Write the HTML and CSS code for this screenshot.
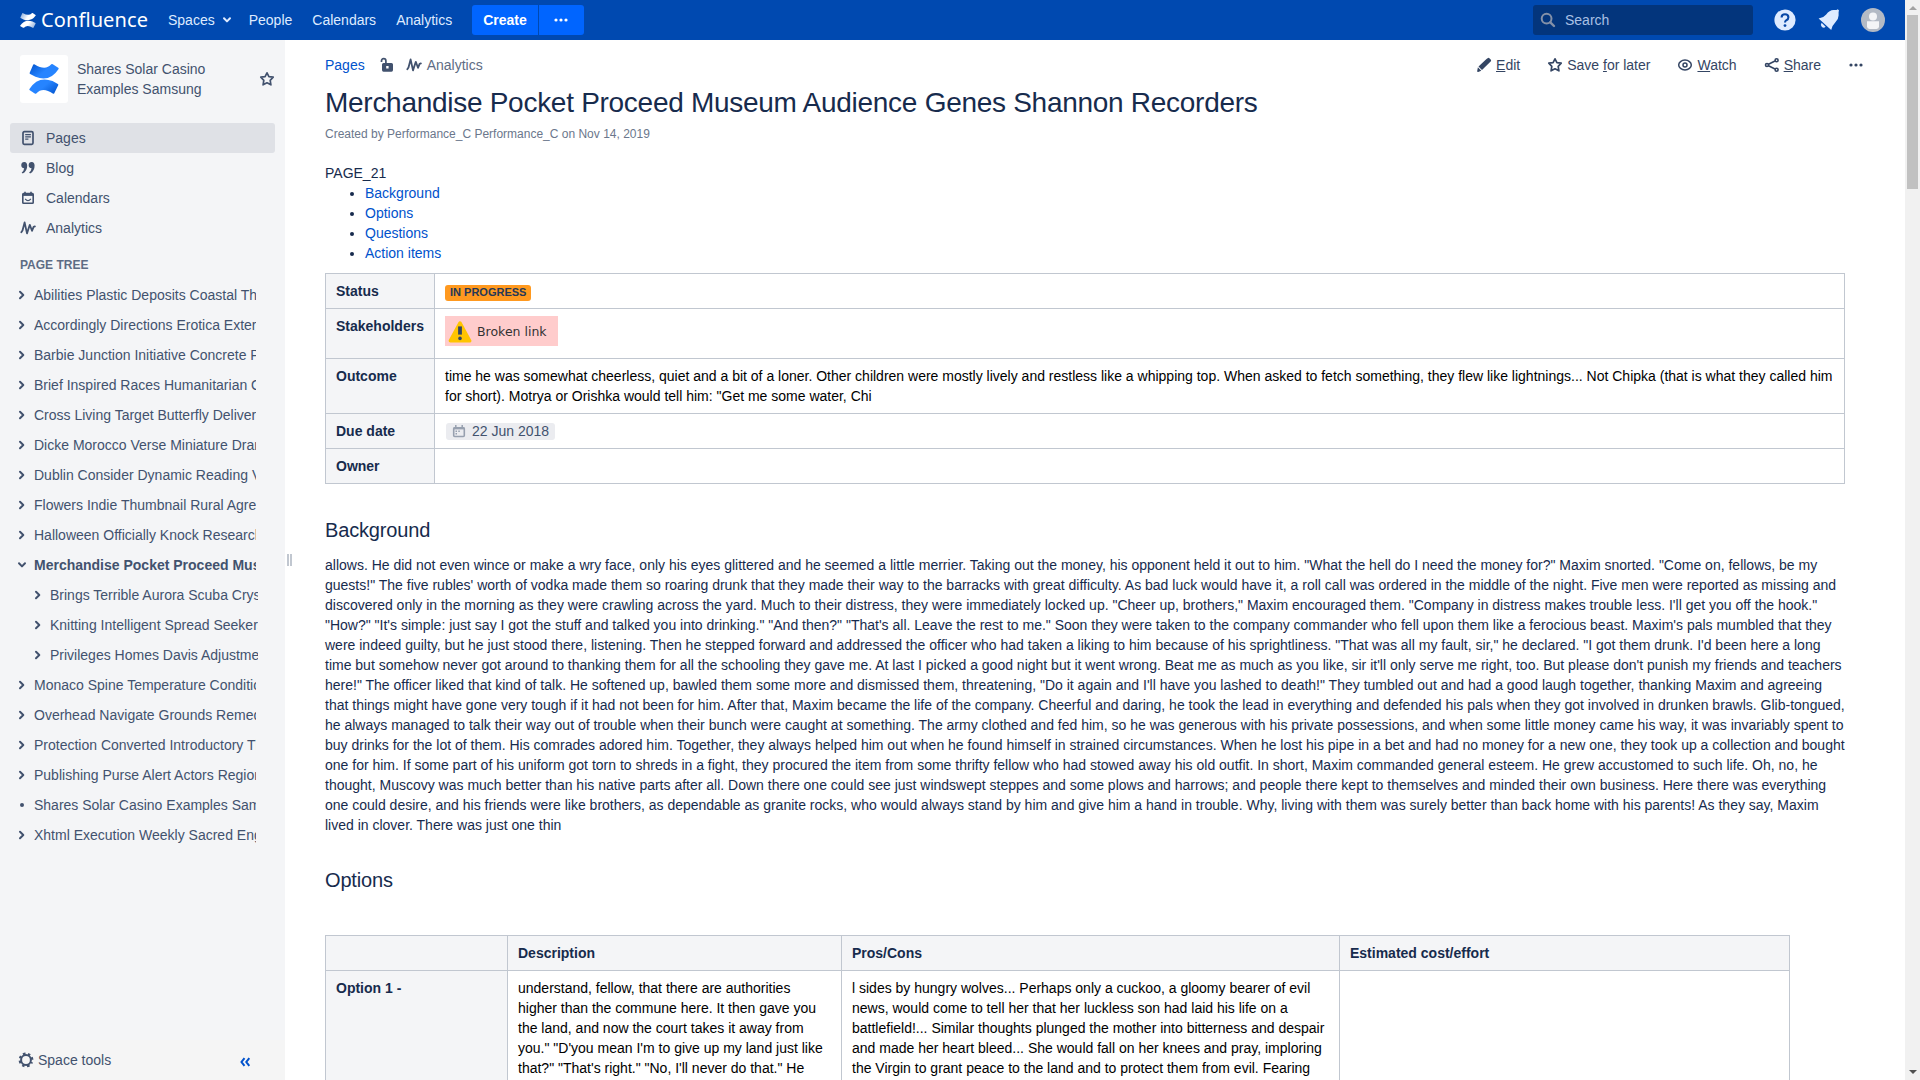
FILE: index.html
```html
<!DOCTYPE html>
<html lang="en">
<head>
<meta charset="utf-8">
<title>Merchandise Pocket Proceed Museum Audience Genes Shannon Recorders</title>
<link rel="stylesheet" href="styles.css">
</head>
<body>
<svg width="0" height="0" class="defs">
  <defs>
    <linearGradient id="gTop" x1="0" y1="0" x2="1" y2="0.6"><stop offset="0" stop-color="#0052cc"/><stop offset="0.6" stop-color="#2684ff"/></linearGradient>
    <linearGradient id="gBot" x1="1" y1="1" x2="0" y2="0.4"><stop offset="0" stop-color="#0052cc"/><stop offset="0.6" stop-color="#2684ff"/></linearGradient>
    <linearGradient id="wTop" x1="0" y1="0" x2="1" y2="0.3"><stop offset="0" stop-color="#fff" stop-opacity=".5"/><stop offset="0.6" stop-color="#fff"/></linearGradient>
    <linearGradient id="wBot" x1="1" y1="1" x2="0" y2="0.7"><stop offset="0" stop-color="#fff" stop-opacity=".5"/><stop offset="0.6" stop-color="#fff"/></linearGradient>
    <symbol id="analytics" viewBox="0 0 16 16"><path d="M1.3 12.2L2.5 10.4L4.6 2.4L7 13.4L9.8 4.8L12 10.8L13.6 6.8L14.9 6.4" fill="none" stroke="currentColor" stroke-width="1.8" stroke-linejoin="round" stroke-linecap="round"/></symbol>
    <symbol id="star" viewBox="0 0 16 16"><path d="M8 1.8L9.9 5.6L14.2 6.2L11.2 9.3L11.9 13.8L8 11.8L4.1 13.8L4.8 9.3L1.8 6.2L6.1 5.6Z" fill="none" stroke="currentColor" stroke-width="1.7" stroke-linejoin="round"/></symbol>
    <symbol id="chev" viewBox="0 0 8 10"><path d="M2 1.8L5.3 5L2 8.2" fill="none" stroke="currentColor" stroke-width="2" stroke-linecap="round" stroke-linejoin="round"/></symbol>
    <symbol id="chevdown" viewBox="0 0 10 8"><path d="M2 2.3L5 5.4L8 2.3" fill="none" stroke="currentColor" stroke-width="2" stroke-linecap="round" stroke-linejoin="round"/></symbol>
    <symbol id="dots" viewBox="0 0 14 4"><circle cx="2" cy="2" r="1.6"/><circle cx="7" cy="2" r="1.6"/><circle cx="12" cy="2" r="1.6"/></symbol>
    <path id="ribbonTop" d="M3.7.6Q4.2-.1 5 .4Q14.2 7 19.3.3Q19.8-.2 20.6.2L25.3 3.8Q26 4.4 25.5 5.2Q18 18.5 5.6 12.8L1 10Q.3 9.5.7 8.6Z"/>
    <path id="ribbonBottom" d="M21.8 29.4Q21.3 30 20.6 29.6Q12 22.5 6.3 29.4Q5.8 29.9 5 29.6L.7 26.3Q0 25.7.4 24.9Q8 11.500 20.400 17.100L25 19.900Q25.700 20.400 25.300 21.300Z"/>
  </defs>
</svg>
<div class="window">
  <div class="app">
    <header class="topbar">
      <a class="brand">
        <svg width="16" height="15" viewBox="0 0 26 30" preserveAspectRatio="none"><use href="#ribbonTop" fill="url(#wTop)"/><use href="#ribbonBottom" fill="url(#wBot)"/></svg>
        <span class="brand-name">Confluence</span>
      </a>
      <nav class="topnav">
        <a>Spaces <svg class="nav-chev" width="10" height="8"><use href="#chevdown"/></svg></a>
        <a>People</a>
        <a>Calendars</a>
        <a>Analytics</a>
      </nav>
      <div class="create"><button class="btn main">Create</button><button class="btn more"><svg width="14" height="4" fill="#fff"><use href="#dots"/></svg></button></div>
      <div class="tools">
        <div class="search"><svg width="16" height="16" viewBox="0 0 16 16"><circle cx="6.6" cy="6.6" r="4.9" fill="none" stroke="currentColor" stroke-width="2"/><path d="M10.3 10.3L14 14" stroke="currentColor" stroke-width="2.4" stroke-linecap="round"/></svg><span>Search</span></div>
        <svg class="t-help" width="22" height="22" viewBox="0 0 22 22"><circle cx="11" cy="11" r="10.6" fill="#deebff"/><path d="M7.6 8.6Q7.6 5.3 11 5.3Q14.4 5.3 14.4 8.2Q14.4 10.2 12.4 11.2Q11 12 11 13.6" fill="none" stroke="#0747a6" stroke-width="2.1"/><circle cx="11" cy="16.6" r="1.4" fill="#0747a6"/></svg>
        <svg class="t-bell" width="22" height="22" viewBox="0 0 22 22" fill="#deebff"><path d="M.6 9.6Q5.500 8.800 8.200 5.400Q11.400 .9 15.500 .9H18.500L19.800 .2L21 1.400L20.600 3V6.500Q20.600 9.600 17.600 13Q14.200 16.400 13.200 20.900Z"/><path d="M3.600 13.700L7.600 17.700Q5.800 19.600 3.900 17.900Q2 16 3.600 13.700Z"/></svg>
        <svg class="t-user" width="24" height="24" viewBox="0 0 24 24"><circle cx="12" cy="12" r="12" fill="#b3bac5"/><circle cx="12" cy="8.6" r="4" fill="#f4f5f7"/><path d="M6 13.3H18V18.6Q18 21 15.6 21H8.4Q6 21 6 18.6Z" fill="#f4f5f7"/></svg>
      </div>
    </header>
    <div class="body">
      <aside class="sidebar">
        <div class="space">
          <div class="space-logo"><svg width="30" height="30" viewBox="0 0 26 30" preserveAspectRatio="none"><use href="#ribbonTop" fill="url(#gTop)"/><use href="#ribbonBottom" fill="url(#gBot)"/></svg></div>
          <div class="space-name">Shares Solar Casino Examples Samsung</div>
          <svg class="space-star" width="16" height="16"><use href="#star"/></svg>
        </div>
        <nav class="links">
          <a class="active"><svg width="16" height="16" viewBox="0 0 16 16" fill="none" stroke="currentColor"><rect x="3" y="1.600" width="10" height="12.800" rx="1.300" stroke-width="1.700"/><path d="M5.200 4.700H10.900M5.200 6.900H10.900M5.200 9.100H8.400" stroke-width="1.200"/></svg>Pages</a>
          <a><svg width="16" height="16" viewBox="0 0 16 16" fill="currentColor"><path d="M4.500 2A3.100 3.100 0 1 0 4.200 8.200Q3.900 10.800 1.700 12.600L2.700 13.600Q7.300 10.800 7.200 5.400Q7 2.100 4.500 2ZM11.900 2A3.100 3.100 0 1 0 11.600 8.200Q11.300 10.800 9.100 12.600L10.100 13.600Q14.700 10.800 14.600 5.400Q14.400 2.100 11.900 2Z"/></svg>Blog</a>
          <a><svg width="16" height="16" viewBox="0 0 16 16" fill="none" stroke="currentColor"><rect x="2.800" y="3.600" width="10.400" height="9.600" rx=".8" stroke-width="1.600"/><path d="M2.500 4.900H13.500" stroke-width="2"/><path d="M5 1.800V4M11 1.800V4" stroke-width="1.600"/><path d="M5.200 8.800Q8 12.300 10.800 8.800" stroke-width="1.300"/></svg>Calendars</a>
          <a><svg width="16" height="16"><use href="#analytics"/></svg>Analytics</a>
        </nav>
        <h5 class="tree-title">PAGE TREE</h5>
        <ul class="tree">
          <li><svg><use href="#chev"/></svg><span>Abilities Plastic Deposits Coastal Theater</span></li>
          <li><svg><use href="#chev"/></svg><span>Accordingly Directions Erotica External</span></li>
          <li><svg><use href="#chev"/></svg><span>Barbie Junction Initiative Concrete Pool</span></li>
          <li><svg><use href="#chev"/></svg><span>Brief Inspired Races Humanitarian Organ</span></li>
          <li><svg><use href="#chev"/></svg><span>Cross Living Target Butterfly Delivery</span></li>
          <li><svg><use href="#chev"/></svg><span>Dicke Morocco Verse Miniature Drama</span></li>
          <li><svg><use href="#chev"/></svg><span>Dublin Consider Dynamic Reading Values</span></li>
          <li><svg><use href="#chev"/></svg><span>Flowers Indie Thumbnail Rural Agreed</span></li>
          <li><svg><use href="#chev"/></svg><span>Halloween Officially Knock Research</span></li>
          <li class="current"><svg class="down"><use href="#chevdown"/></svg><span>Merchandise Pocket Proceed Museum</span></li>
          <li class="child"><svg><use href="#chev"/></svg><span>Brings Terrible Aurora Scuba Crystal</span></li>
          <li class="child"><svg><use href="#chev"/></svg><span>Knitting Intelligent Spread Seekers</span></li>
          <li class="child"><svg><use href="#chev"/></svg><span>Privileges Homes Davis Adjustment</span></li>
          <li><svg><use href="#chev"/></svg><span>Monaco Spine Temperature Condition</span></li>
          <li><svg><use href="#chev"/></svg><span>Overhead Navigate Grounds Remedy</span></li>
          <li><svg><use href="#chev"/></svg><span>Protection Converted Introductory Them</span></li>
          <li><svg><use href="#chev"/></svg><span>Publishing Purse Alert Actors Regions</span></li>
          <li><svg viewBox="0 0 8 10"><circle cx="4" cy="5" r="2" fill="currentColor"/></svg><span>Shares Solar Casino Examples Samsung</span></li>
          <li><svg><use href="#chev"/></svg><span>Xhtml Execution Weekly Sacred Engine</span></li>
        </ul>
        <div class="side-foot">
          <svg width="16" height="16" viewBox="0 0 16 16" fill="none" stroke="currentColor"><circle cx="8" cy="8" r="4.900" stroke-width="2"/><circle cx="8" cy="8" r="6.300" stroke-width="2.200" stroke-dasharray="2.500 2.448" stroke-dashoffset="1.250" transform="rotate(22.500 8 8)"/></svg>
          <span>Space tools</span>
          <svg class="collapse" width="11" height="10" viewBox="0 0 11 10"><path d="M4.500 1.200L1.500 5L4.500 8.800M9.300 1.200L6.300 5L9.300 8.800" fill="none" stroke="#0052cc" stroke-width="2"/></svg>
        </div>
      </aside>
      <div class="splitter"><i></i><i></i></div>
      <main class="content">
        <div class="crumbs">
          <a class="link">Pages</a>
          <svg class="lock" width="16" height="16" viewBox="0 0 16 16"><path d="M2.500 5V4Q2.500 1.700 4.700 1.700Q6.900 1.700 6.900 4V7" fill="none" stroke="currentColor" stroke-width="1.700"/><path fill-rule="evenodd" d="M4.500 6H12.500Q14 6 14 7.500V13Q14 14.700 12.500 14.700H4.500Q3 14.700 3 13V7.500Q3 6 4.500 6ZM7.200 9V11.500H9.600V9Z" fill="currentColor"/></svg>
          <svg class="an" width="16" height="16"><use href="#analytics"/></svg>
          <span class="an-text">Analytics</span>
          <div class="actions">
            <a class="edit"><svg width="16" height="16" viewBox="0 0 16 16" fill="currentColor"><path d="M10.500 2L12 .9Q12.700.6 13.400 1.200L14.900 2.700Q15.400 3.400 14.900 4.200L6 13L2.500 9.500ZM1.900 10.300L5.300 13.700L2.200 14.900Q1 15.100 1.200 14Z"/></svg><span><u>E</u>dit</span></a>
            <a class="save"><svg width="16" height="16"><use href="#star"/></svg><span>Save <u>f</u>or later</span></a>
            <a class="watch"><svg width="16" height="16" viewBox="0 0 16 16" fill="none" stroke="currentColor"><ellipse cx="8" cy="8" rx="6.300" ry="4.900" stroke-width="1.500"/><circle cx="8" cy="8" r="2" stroke-width="1.500"/></svg><span><u>W</u>atch</span></a>
            <a class="share"><svg width="16" height="16" viewBox="0 0 16 16" fill="none" stroke="currentColor" stroke-width="1.600"><circle cx="3" cy="8" r="1.500"/><circle cx="12.600" cy="3.300" r="1.500"/><circle cx="12.600" cy="12.700" r="1.500"/><path d="M4.500 7.300L11 4M4.500 8.700L11 12"/></svg><span><u>S</u>hare</span></a>
            <svg class="more-dots" width="14" height="4" fill="currentColor"><use href="#dots"/></svg>
          </div>
        </div>
        <h1>Merchandise Pocket Proceed Museum Audience Genes Shannon Recorders</h1>
        <p class="meta">Created by Performance_C Performance_C on Nov 14, 2019</p>
        <p class="lead">PAGE_21</p>
        <ul class="toc"><li><a>Background</a></li><li><a>Options</a></li><li><a>Questions</a></li><li><a>Action items</a></li></ul>
        <table class="info">
          <tr><th>Status</th><td><span class="lozenge">IN PROGRESS</span></td></tr>
          <tr><th>Stakeholders</th><td class="tall"><span class="broken"><svg width="24" height="22" viewBox="0 0 24 22"><path d="M12 2.200L21.600 19.800H2.400Z" fill="#ffc400" stroke="#ffc400" stroke-width="3.600" stroke-linejoin="round"/><path d="M12 5.400V13.600" stroke="#344563" stroke-width="3.800"/><circle cx="12" cy="17.400" r="1.800" fill="#344563"/></svg>Broken link</span></td></tr>
          <tr><th>Outcome</th><td>time he was somewhat cheerless, quiet and a bit of a loner. Other children were mostly lively and restless like a whipping top. When asked to fetch something, they flew like lightnings... Not Chipka (that is what they called him for short). Motrya or Orishka would tell him: "Get me some water, Chi</td></tr>
          <tr><th>Due date</th><td><span class="date"><svg width="14" height="13" viewBox="0 0 14 13" fill="none" stroke="#97a0af"><rect x="1.700" y="2.700" width="10.600" height="8.800" rx="1" stroke-width="1.600"/><path d="M1.500 3.400H12.500" stroke-width="2"/><path d="M3.800 0V3M10.200 0V3" stroke-width="1.500"/><path d="M3.500 6.300H5M6.300 6.300H7.800M3.500 8.700H5" stroke-width="1.500"/></svg><span>22 Jun 2018</span></span></td></tr>
          <tr><th>Owner</th><td></td></tr>
        </table>
        <h2 class="h-bg">Background</h2>
        <p class="para">allows. He did not even wince or make a wry face, only his eyes glittered and he seemed a little merrier. Taking out the money, his opponent held it out to him. "What the hell do I need the money for?" Maxim snorted. "Come on, fellows, be my guests!" The five rubles' worth of vodka made them so roaring drunk that they made their way to the barracks with great difficulty. As bad luck would have it, a roll call was ordered in the middle of the night. Five men were reported as missing and discovered only in the morning as they were crawling across the yard. Much to their distress, they were immediately locked up. "Cheer up, brothers," Maxim encouraged them. "Company in distress makes trouble less. I'll get you off the hook." "How?" "It's simple: just say I got the stuff and talked you into drinking." "And then?" "That's all. Leave the rest to me." Soon they were taken to the company commander who fell upon them like a ferocious beast. Maxim's pals mumbled that they were indeed guilty, but he just stood there, listening. Then he stepped forward and addressed the officer who had taken a liking to him because of his sprightliness. "That was all my fault, sir," he declared. "I got them drunk. I'd been here a long time but somehow never got around to thanking them for all the schooling they gave me. At last I picked a good night but it went wrong. Beat me as much as you like, sir it'll only serve me right, too. But please don't punish my friends and teachers here!" The officer liked that kind of talk. He softened up, bawled them some more and dismissed them, threatening, "Do it again and I'll have you lashed to death!" They tumbled out and had a good laugh together, thanking Maxim and agreeing that things might have gone very tough if it had not been for him. After that, Maxim became the life of the company. Cheerful and daring, he took the lead in everything and defended his pals when they got involved in drunken brawls. Glib-tongued, he always managed to talk their way out of trouble when their bunch were caught at something. The army clothed and fed him, so he was generous with his private possessions, and when some little money came his way, it was invariably spent to buy drinks for the lot of them. His comrades adored him. Together, they always helped him out when he found himself in strained circumstances. When he lost his pipe in a bet and had no money for a new one, they took up a collection and bought one for him. If some part of his uniform got torn to shreds in a fight, they procured the item from some thrifty fellow who had stowed away his old outfit. In short, Maxim commanded general esteem. He grew accustomed to such life. Oh, no, he thought, Muscovy was much better than his native parts after all. Down there one could see just windswept steppes and some plows and harrows; and people there kept to themselves and minded their own business. Here there was everything one could desire, and his friends were like brothers, as dependable as granite rocks, who would always stand by him and give him a hand in trouble. Why, living with them was surely better than back home with his parents! As they say, Maxim lived in clover. There was just one thin</p>
        <h2 class="h-opt">Options</h2>
        <table class="options">
          <colgroup><col class="c1"><col class="c2"><col class="c3"><col class="c4"></colgroup>
          <tr><th></th><th>Description</th><th>Pros/Cons</th><th>Estimated cost/effort</th></tr>
          <tr><th>Option 1 -</th><td>understand, fellow, that there are authorities higher than the commune here. It then gave you the land, and now the court takes it away from you." "D'you mean I'm to give up my land just like that?" "That's right." "No, I'll never do that." He</td><td>l sides by hungry wolves... Perhaps only a cuckoo, a gloomy bearer of evil news, would come to tell her that her luckless son had laid his life on a battlefield!... Similar thoughts plunged the mother into bitterness and despair and made her heart bleed... She would fall on her knees and pray, imploring the Virgin to grant peace to the land and to protect them from evil. Fearing</td><td></td></tr>
        </table>
      </main>
    </div>
  </div>
  <div class="scrollbar"><i class="up"></i><i class="thumb"></i><i class="dn"></i></div>
</div>
</body>
</html>
```
FILE: styles.css
```css
* { box-sizing: border-box; }
body { margin: 0; font: 14px/20px "Liberation Sans", Arial, sans-serif; color: #172b4d; background: #fff; overflow: hidden; }
svg { display: block; flex: none; }
.defs { width: 0; height: 0; }
ul, p, h1, h2, h5 { margin: 0; padding: 0; font-weight: 400; }
.window { display: flex; height: 1080px; width: 1920px; overflow: hidden; }
.app { width: 1905px; display: flex; flex-direction: column; }

.topbar { height: 40px; flex: none; background: #0049b0; color: #deebff; display: flex; align-items: center; padding: 0 20px; }
.brand { display: flex; align-items: center; width: 148px; gap: 5px; }
.brand-name { font: 400 20px/24px "Noto Sans", sans-serif; letter-spacing: .1px; color: #fff; }
.topnav { display: flex; gap: 20px; width: 304px; }
.topnav a { display: flex; align-items: center; }
.nav-chev { margin: 0 -3px 0 7px; }
.create { display: flex; gap: 1px; }
.btn { border: 0; height: 30px; background: #0065ff; color: #fff; font: bold 14px/20px "Liberation Sans", Arial, sans-serif; padding: 0; display: flex; align-items: center; justify-content: center; }
.main { width: 66px; border-radius: 3px 0 0 3px; }
.more { width: 45px; border-radius: 0 3px 3px 0; padding-right: 2px; }
.tools { margin-left: auto; display: flex; align-items: center; }
.search { width: 220px; height: 30px; border-radius: 3px; background: #03357c; display: flex; align-items: center; padding-left: 7px; gap: 9px; color: #8491a8; }
.search span { color: #a9c0e4; }
.t-help { margin-left: 21px; }
.t-bell { margin-left: 22px; }
.t-user { margin-left: 21px; }

.body { display: flex; flex: 1; min-height: 0; }
.sidebar { width: 285px; background: #f4f5f7; color: #42526e; display: flex; flex-direction: column; flex: none; }
.space { height: 83px; padding: 15px 10px 0 20px; display: flex; }
.space-logo { width: 48px; height: 48px; background: #fff; border-radius: 3px; display: flex; align-items: center; justify-content: center; }
.space-name { width: 145px; margin: 4px 0 0 9px; }
.space-star { margin: 16px 0 0 37px; }
.links { padding: 0 10px; }
.links a { height: 30px; border-radius: 3px; display: flex; align-items: center; gap: 10px; padding-left: 10px; }
.links .active { background: #dfe1e6; }
.tree-title { font: bold 12px/20px "Liberation Sans", Arial, sans-serif; color: #5e6c84; padding: 12px 20px 5px; height: 37px; }
.tree { list-style: none; padding-left: 18px; }
.tree li { height: 30px; display: flex; align-items: center; }
.tree svg { width: 8px; height: 10px; }
.tree svg.down { width: 10px; height: 8px; margin: 0 -1px; }
.tree span { width: 222px; margin-left: 8px; overflow: hidden; white-space: nowrap; }
.tree .child { padding-left: 16px; }
.tree .child span { width: 208px; }
.tree .current { font-weight: bold; }
.side-foot { margin-top: auto; height: 40px; background: #f5f5f5; display: flex; align-items: center; padding: 0 34px 0 18px; gap: 4px; }
.side-foot .collapse { margin: 4px 0 0 auto; }
.splitter { width: 9px; flex: none; display: flex; gap: 1px; align-items: center; padding: 0 0 0 2px; }
.splitter i { width: 2px; height: 12px; background: #c1c7d0; }

.content { padding: 15px 60px 0 31px; flex: 1; overflow: hidden; }
.crumbs { display: flex; align-items: center; height: 20px; }
.link, .toc a { color: #0052cc; }
.lock { margin-left: 14px; color: #42526e; }
.an { margin-left: 11px; color: #42526e; }
.an-text { margin-left: 5px; color: #5e6c84; }
.actions { margin: 0 -18px 0 auto; display: flex; align-items: center; color: #344563; }
.actions a { display: flex; align-items: center; gap: 4px; }
.save, .watch, .share { margin-left: 27px; }
.more-dots { margin-left: 28px; }
h1 { font-size: 28px; line-height: 32px; letter-spacing: -.28px; margin-top: 12px; }
.meta { font-size: 12px; line-height: 18px; color: #6b778c; margin-top: 6px; height: 38px; }
.lead { height: 20px; }
.toc { padding-left: 40px; }
table { border-collapse: collapse; }
th, td { border: 1px solid #c1c7d0; padding: 7px 10px; text-align: left; vertical-align: top; }
th { background: #f4f5f7; font-weight: bold; }
td { color: #000; }
.info { width: 1520px; margin-top: 10px; }
.info tr { height: 35px; }
.info th { width: 109px; }
.info .tall { height: 50px; }
.lozenge { display: block; width: 86px; height: 16px; margin-top: 4px; border-radius: 3px; background: #ff991f; color: #253858; font: bold 11px/14px "Liberation Sans", Arial, sans-serif; padding-left: 5px; white-space: nowrap; }
.broken { display: flex; align-items: center; width: 113px; height: 30px; background: #fcc; color: #333; font: 12.5px/20px "DejaVu Sans", sans-serif; padding: 1px 0 0 3px; gap: 5px; white-space: nowrap; }
.date { display: flex; align-items: center; width: 109px; height: 17px; margin: 2px 0 1px 1px; border-radius: 3px; background: #ebecf0; color: #42526e; padding-left: 6px; gap: 6px; }
.date span { padding-bottom: 2px; }
h2 { font-size: 20px; line-height: 24px; letter-spacing: -.16px; }
.h-bg { margin: 34px 0 13px; }
.h-opt { margin: 33px 0 43px; }
.para { width: 1520px; }
.options { table-layout: fixed; width: 1465px; }
.c1 { width: 182px; } .c2 { width: 334px; } .c3 { width: 498px; } .c4 { width: 450px; }
.options tr:first-child { height: 35px; }

.scrollbar { width: 15px; background: #f1f1f1; display: flex; flex-direction: column; align-items: center; height: 1080px; }
.scrollbar .up { margin: 6px 0 5px; border: 4px solid transparent; border-top: 0; border-bottom-color: #a3a3a3; }
.scrollbar .thumb { width: 11px; height: 174px; background: #c1c1c1; }
.scrollbar .dn { margin: auto 0 6px; border: 4px solid transparent; border-bottom: 0; border-top-color: #505050; }
```
